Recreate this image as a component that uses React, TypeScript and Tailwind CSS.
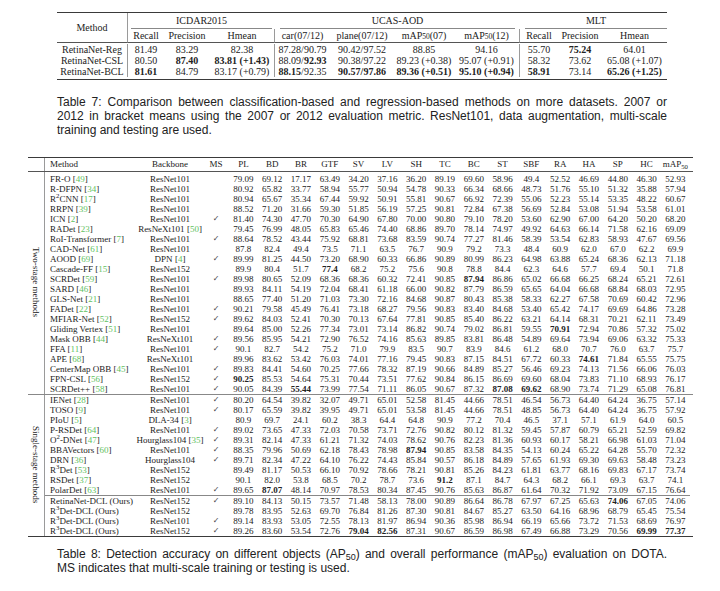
import React from "react";

const serif = "font-['Liberation_Serif','Times_New_Roman',serif]";
const sans = "font-['Liberation_Sans_Narrow','Liberation_Sans',Arial,sans-serif]";

function Rich({ s }: { s: string }) {
  const parts = s.split("**");
  return (
    <>
      {parts.map((p, i) =>
        i % 2 ? (
          <b key={i} className="font-bold">
            {p}
          </b>
        ) : (
          <React.Fragment key={i}>{p}</React.Fragment>
        )
      )}
    </>
  );
}

function Name({ s }: { s: string }) {
  const m = s.match(/^(.*)\^(\d)(.*)$/);
  if (!m) return <>{s}</>;
  return (
    <>
      {m[1]}
      <sup>{m[2]}</sup>
      {m[3]}
    </>
  );
}

function Cite({ n }: { n: string }) {
  if (!n) return null;
  return (
    <>
      {" "}[<span className="text-[#5fc25f]">{n}</span>]
    </>
  );
}

// ---- Table 7 ----
const t7cols = "grid grid-cols-[71px_36px_46px_65px_55px_64px_60px_66px_38px_44px_65px]";

const t7rows = [
  ["RetinaNet-Reg", "81.49", "83.29", "82.38", "87.28/90.79", "90.42/97.52", "88.85", "94.16", "55.70", "**75.24**", "64.01"],
  ["RetinaNet-CSL", "80.50", "**87.40**", "**83.81 (+1.43)**", "88.09/**92.93**", "90.38/97.22", "89.23 (+0.38)", "95.07 (+0.91)", "58.32", "73.62", "65.08 (+1.07)"],
  ["RetinaNet-BCL", "**81.61**", "84.79", "83.17 (+0.79)", "**88.15**/92.35", "**90.57/97.86**", "**89.36 (+0.51)**", "**95.10 (+0.94)**", "**58.91**", "73.14", "**65.26 (+1.25)**"],
];

function Table7() {
  const sub: React.ReactNode[] = [
    "Recall",
    "Precision",
    "Hmean",
    "car(07/12)",
    "plane(07/12)",
    <>mAP<sub>50</sub> (07)</>,
    <>mAP<sub>50</sub> (12)</>,
    "Recall",
    "Precision",
    "Hmean",
  ];
  return (
    <div className={`w-[610px] border-y-[1.5px] border-[#3a3a3a] text-[10px] leading-[11px] ${serif}`}>
      <div className={t7cols}>
        <div className="row-span-2 flex items-center justify-center border-r border-b border-r-[#9a9a9a] border-b-[#555]">
          Method
        </div>
        <div className="col-span-3 h-[16px] flex flex-col justify-end">
          <div className="mx-[3px] pb-[2px] text-center border-b border-[#888]">ICDAR2015</div>
        </div>
        <div className="col-span-4 h-[16px] flex flex-col justify-end">
          <div className="mx-[5px] pb-[2px] text-center border-b border-[#888]">UCAS-AOD</div>
        </div>
        <div className="col-span-3 h-[16px] flex flex-col justify-end">
          <div className="ml-[5px] pb-[2px] text-center border-b border-[#888]">MLT</div>
        </div>
        {sub.map((h, i) => (
          <div
            key={i}
            className={`h-[14px] flex items-center justify-center whitespace-nowrap border-b border-b-[#555] ${
              i === 2 || i === 6 ? "border-r border-r-[#9a9a9a]" : ""
            }`}
          >
            {h}
          </div>
        ))}
      </div>
      <div className={`${t7cols} pt-[1px] pb-[1.5px]`}>
        {t7rows.map((r) =>
          r.map((c, i) => (
            <div
              key={r[0] + i}
              className={`h-[11px] flex items-center justify-center whitespace-nowrap ${
                i === 0 || i === 3 || i === 7 ? "border-r border-[#9a9a9a]" : ""
              }`}
            >
              <Rich s={c} />
            </div>
          ))
        )}
      </div>
    </div>
  );
}

// ---- Table 8 ----
type Row = [string, string, string, string, boolean, string];

const twoStage: Row[] = [
  ["FR-O", "49", "ResNet101", "", false, "79.09 69.12 17.17 63.49 34.20 37.16 36.20 89.19 69.60 58.96 49.4 52.52 46.69 44.80 46.30 52.93"],
  ["R-DFPN", "34", "ResNet101", "", false, "80.92 65.82 33.77 58.94 55.77 50.94 54.78 90.33 66.34 68.66 48.73 51.76 55.10 51.32 35.88 57.94"],
  ["R^2CNN", "17", "ResNet101", "", false, "80.94 65.67 35.34 67.44 59.92 50.91 55.81 90.67 66.92 72.39 55.06 52.23 55.14 53.35 48.22 60.67"],
  ["RRPN", "39", "ResNet101", "", false, "88.52 71.20 31.66 59.30 51.85 56.19 57.25 90.81 72.84 67.38 56.69 52.84 53.08 51.94 53.58 61.01"],
  ["ICN", "2", "ResNet101", "", true, "81.40 74.30 47.70 70.30 64.90 67.80 70.00 90.80 79.10 78.20 53.60 62.90 67.00 64.20 50.20 68.20"],
  ["RADet", "23", "ResNeXt101", "50", false, "79.45 76.99 48.05 65.83 65.46 74.40 68.86 89.70 78.14 74.97 49.92 64.63 66.14 71.58 62.16 69.09"],
  ["RoI-Transformer", "7", "ResNet101", "", true, "88.64 78.52 43.44 75.92 68.81 73.68 83.59 90.74 77.27 81.46 58.39 53.54 62.83 58.93 47.67 69.56"],
  ["CAD-Net", "61", "ResNet101", "", false, "87.8 82.4 49.4 73.5 71.1 63.5 76.7 90.9 79.2 73.3 48.4 60.9 62.0 67.0 62.2 69.9"],
  ["AOOD", "69", "DPN", "4", true, "89.99 81.25 44.50 73.20 68.90 60.33 66.86 90.89 80.99 86.23 64.98 63.88 65.24 68.36 62.13 71.18"],
  ["Cascade-FF", "15", "ResNet152", "", false, "89.9 80.4 51.7 *77.4 68.2 75.2 75.6 90.8 78.8 84.4 62.3 64.6 57.7 69.4 50.1 71.8"],
  ["SCRDet", "59", "ResNet101", "", true, "89.98 80.65 52.09 68.36 68.36 60.32 72.41 90.85 *87.94 86.86 65.02 66.68 66.25 68.24 65.21 72.61"],
  ["SARD", "46", "ResNet101", "", false, "89.93 84.11 54.19 72.04 68.41 61.18 66.00 90.82 87.79 86.59 65.65 64.04 66.68 68.84 68.03 72.95"],
  ["GLS-Net", "21", "ResNet101", "", false, "88.65 77.40 51.20 71.03 73.30 72.16 84.68 90.87 80.43 85.38 58.33 62.27 67.58 70.69 60.42 72.96"],
  ["FADet", "22", "ResNet101", "", true, "90.21 79.58 45.49 76.41 73.18 68.27 79.56 90.83 83.40 84.68 53.40 65.42 74.17 69.69 64.86 73.28"],
  ["MFIAR-Net", "52", "ResNet152", "", true, "89.62 84.03 52.41 70.30 70.13 67.64 77.81 90.85 85.40 86.22 63.21 64.14 68.31 70.21 62.11 73.49"],
  ["Gliding Vertex", "51", "ResNet101", "", false, "89.64 85.00 52.26 77.34 73.01 73.14 86.82 90.74 79.02 86.81 59.55 *70.91 72.94 70.86 57.32 75.02"],
  ["Mask OBB", "44", "ResNeXt101", "", true, "89.56 85.95 54.21 72.90 76.52 74.16 85.63 89.85 83.81 86.48 54.89 69.64 73.94 69.06 63.32 75.33"],
  ["FFA", "11", "ResNet101", "", true, "90.1 82.7 54.2 75.2 71.0 79.9 83.5 90.7 83.9 84.6 61.2 68.0 70.7 76.0 63.7 75.7"],
  ["APE", "68", "ResNeXt101", "", false, "89.96 83.62 53.42 76.03 74.01 77.16 79.45 90.83 87.15 84.51 67.72 60.33 *74.61 71.84 65.55 75.75"],
  ["CenterMap OBB", "45", "ResNet101", "", true, "89.83 84.41 54.60 70.25 77.66 78.32 87.19 90.66 84.89 85.27 56.46 69.23 74.13 71.56 66.06 76.03"],
  ["FPN-CSL", "56", "ResNet152", "", true, "*90.25 85.53 54.64 75.31 70.44 73.51 77.62 90.84 86.15 86.69 69.60 68.04 73.83 71.10 68.93 76.17"],
  ["SCRDet++", "58", "ResNet101", "", true, "90.05 84.39 *55.44 73.99 77.54 71.11 86.05 90.67 87.32 *87.08 *69.62 68.90 73.74 71.29 65.08 76.81"],
];

const singleStage: Row[] = [
  ["IENet", "28", "ResNet101", "", true, "80.20 64.54 39.82 32.07 49.71 65.01 52.58 81.45 44.66 78.51 46.54 56.73 64.40 64.24 36.75 57.14"],
  ["TOSO", "9", "ResNet101", "", true, "80.17 65.59 39.82 39.95 49.71 65.01 53.58 81.45 44.66 78.51 48.85 56.73 64.40 64.24 36.75 57.92"],
  ["PIoU", "5", "DLA-34", "3", false, "80.9 69.7 24.1 60.2 38.3 64.4 64.8 90.9 77.2 70.4 46.5 37.1 57.1 61.9 64.0 60.5"],
  ["P-RSDet", "64", "ResNet101", "", true, "89.02 73.65 47.33 72.03 70.58 73.71 72.76 90.82 80.12 81.32 59.45 57.87 60.79 65.21 52.59 69.82"],
  ["O^2-DNet", "47", "Hourglass104", "35", true, "89.31 82.14 47.33 61.21 71.32 74.03 78.62 90.76 82.23 81.36 60.93 60.17 58.21 66.98 61.03 71.04"],
  ["BBAVectors", "60", "ResNet101", "", true, "88.35 79.96 50.69 62.18 78.43 78.98 *87.94 90.85 83.58 84.35 54.13 60.24 65.22 64.28 55.70 72.32"],
  ["DRN", "36", "Hourglass104", "", true, "89.71 82.34 47.22 64.10 76.22 74.43 85.84 90.57 86.18 84.89 57.65 61.93 69.30 69.63 58.48 73.23"],
  ["R^3Det", "53", "ResNet152", "", false, "89.49 81.17 50.53 66.10 70.92 78.66 78.21 90.81 85.26 84.23 61.81 63.77 68.16 69.83 67.17 73.74"],
  ["RSDet", "37", "ResNet152", "", false, "90.1 82.0 53.8 68.5 70.2 78.7 73.6 *91.2 87.1 84.7 64.3 68.2 66.1 69.3 63.7 74.1"],
  ["PolarDet", "63", "ResNet101", "", true, "89.65 *87.07 48.14 70.97 78.53 80.34 87.45 90.76 85.63 86.87 61.64 70.32 71.92 73.09 67.15 76.64"],
];

const ours: Row[] = [
  ["RetinaNet-DCL (Ours)", "", "ResNet152", "", true, "89.10 84.13 50.15 73.57 71.48 58.13 78.00 90.89 86.64 86.78 67.97 67.25 65.63 *74.06 67.05 74.06"],
  ["R^3Det-DCL (Ours)", "", "ResNet152", "", false, "89.78 83.95 52.63 69.70 76.84 81.26 87.30 90.81 84.67 85.27 63.50 64.16 68.96 68.79 65.45 75.54"],
  ["R^3Det-DCL (Ours)", "", "ResNet101", "", true, "89.14 83.93 53.05 72.55 78.13 81.97 86.94 90.36 85.98 86.94 66.19 65.66 73.72 71.53 68.69 76.97"],
  ["R^3Det-DCL (Ours)", "", "ResNet152", "", true, "89.26 83.60 53.54 72.76 *79.04 *82.56 87.31 90.67 86.59 86.98 67.49 66.88 73.29 70.56 *69.99 *77.37"],
];

const heads = ["PL", "BD", "BR", "GTF", "SV", "LV", "SH", "TC", "BC", "ST", "SBF", "RA", "HA", "SP", "HC"];

function DataRow({ r }: { r: Row }) {
  const [name, cite, bb, bcite, ms, vals] = r;
  return (
    <div className="flex h-[10px] items-center">
      <div className="w-[92px] pl-[5px] whitespace-nowrap">
        <Name s={name} />
        <Cite n={cite} />
      </div>
      <div className="w-[66px] flex justify-center whitespace-nowrap">
        <span>
          {bb}
          <Cite n={bcite} />
        </span>
      </div>
      <div className="w-[26px] flex justify-center text-[8px] text-[#444] font-['DejaVu_Sans',sans-serif]">
        {ms ? "✓" : ""}
      </div>
      {vals.split(" ").map((v, i) => (
        <div key={i} className="w-[28.8px] flex justify-center whitespace-nowrap">
          {v.startsWith("*") ? <b className="font-bold">{v.slice(1)}</b> : v}
        </div>
      ))}
    </div>
  );
}

function Table8() {
  return (
    <div className={`w-[665px] border-y-[1.5px] border-[#3a3a3a] text-[9px] leading-[10px] ${serif}`}>
      <div className="flex h-[14px] border-b border-b-[#555]">
        <div className="w-[17px] border-r border-[#9a9a9a]" />
        <div className="flex items-center">
          <div className="w-[92px] pl-[5px]">Method</div>
          <div className="w-[66px] text-center">Backbone</div>
          <div className="w-[26px] text-center">MS</div>
          {heads.map((h) => (
            <div key={h} className="w-[28.8px] text-center">
              {h}
            </div>
          ))}
          <div className="w-[28.8px] text-center whitespace-nowrap">
            mAP<sub>50</sub>
          </div>
        </div>
      </div>
      <div className="flex border-b border-[#888]">
        <div className="w-[17px] border-r border-[#9a9a9a] flex items-center justify-center">
          <span className="[writing-mode:vertical-rl] whitespace-nowrap">Two-stage methods</span>
        </div>
        <div className="pt-[2px]">
          {twoStage.map((r) => (
            <DataRow key={r[0]} r={r} />
          ))}
        </div>
      </div>
      <div className="flex">
        <div className="w-[17px] border-r border-[#9a9a9a] flex items-center justify-center">
          <span className="[writing-mode:vertical-rl] whitespace-nowrap">Single-stage methods</span>
        </div>
        <div>
          <div className="border-b border-[#888]">
            {singleStage.map((r) => (
              <DataRow key={r[0]} r={r} />
            ))}
          </div>
          {ours.map((r, i) => (
            <DataRow key={i} r={r} />
          ))}
        </div>
      </div>
    </div>
  );
}

export default function App() {
  return (
    <div className="w-[720px] h-[591px] bg-white text-[#222] overflow-hidden">
      <div className="pt-[12px] pl-[57px]">
        <Table7 />
      </div>

      <div className={`mt-[15.5px] ml-[57px] w-[610px] text-[12px] leading-[14px] ${sans}`}>
        <div className="text-justify [text-align-last:justify]">
          Table 7: Comparison between classification-based and regression-based methods on more datasets. 2007 or
        </div>
        <div className="text-justify [text-align-last:justify]">
          2012 in bracket means using the 2007 or 2012 evaluation metric. ResNet101, data augmentation, multi-scale
        </div>
        <div>training and testing are used.</div>
      </div>

      <div className="mt-[19.5px] ml-[28px]">
        <Table8 />
      </div>

      <div className={`mt-[10.5px] ml-[57px] w-[610px] text-[12px] leading-[14px] ${sans}`}>
        <div className="text-justify [text-align-last:justify]">
          Table 8: Detection accuracy on different objects (AP<sub>50</sub>) and overall performance (mAP<sub>50</sub>) evaluation on DOTA.
        </div>
        <div>MS indicates that multi-scale training or testing is used.</div>
      </div>
    </div>
  );
}
